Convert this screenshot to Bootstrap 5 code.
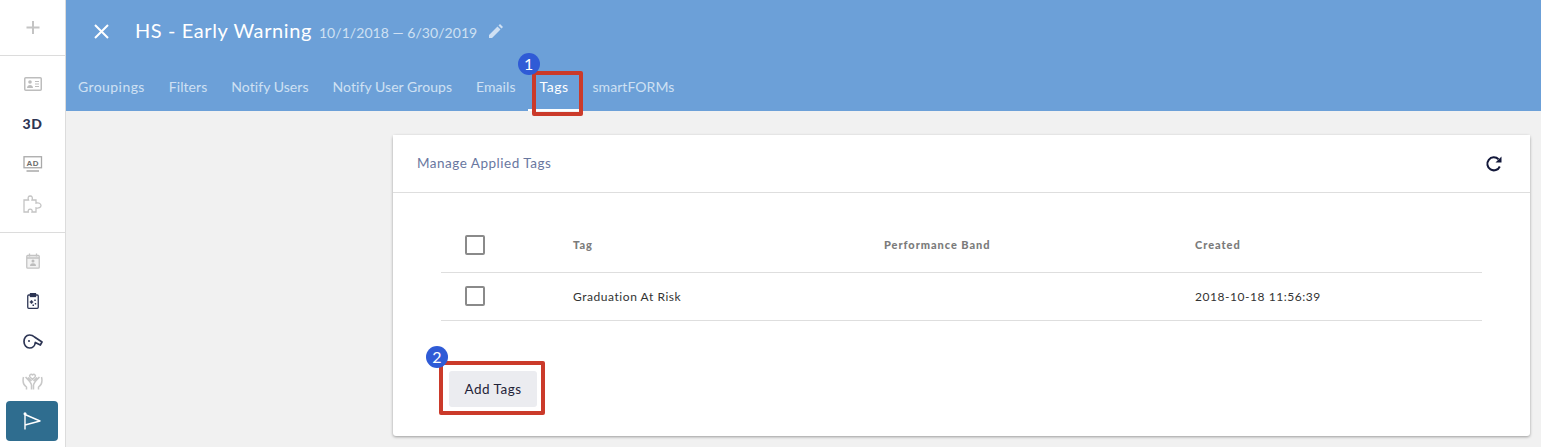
<!DOCTYPE html>
<html lang="en"><head><meta charset="utf-8"><title>Tags</title>
<link href="https://cdn.jsdelivr.net/npm/bootstrap@5.3.0/dist/css/bootstrap.min.css" rel="stylesheet">
<style>
html,body{height:447px;overflow:hidden}
body{font-family:"Lato","Noto Sans",sans-serif;background:#f1f1f1;color:#333;letter-spacing:.03em}
.app-shell{height:447px}
.side-rail{width:66px;flex:none;background:#fff;border-right:1px solid #dcdcdc}
.rail-top{height:56px;border-bottom:1px solid #dcdcdc}
.rail-group{height:177px;padding-top:8px;border-bottom:1px solid #dcdcdc}
.rail-item{height:40px}
.rail-label{font-size:14px;font-weight:900;color:#2d3554;letter-spacing:.04em;padding-bottom:2px}
.rail-active{width:52px;height:40px;background:#2f6d8f;border-radius:4px;margin:0 0 0 6px}
.rail-low{padding-top:8px}
.top-band{height:111px;background:#6ca0d8;color:#fff}
.title-row{height:62px;padding-left:28px}
.page-title{font-size:20px;margin:0 0 0 26px;padding-bottom:3px;letter-spacing:.6px;font-weight:400}
.page-dates{font-size:14px;color:#cfe0f3;margin-left:7px;letter-spacing:.05px;padding-top:3px}
.page-pen{margin-left:12px}
.tab-row{height:49px;padding-left:0}
.tab-link{font-size:14px;color:#cfe0f3;padding:0 12px;height:49px;display:flex;align-items:center;text-decoration:none;position:relative;letter-spacing:.06px}
.tab-first{letter-spacing:.42px}
.tab-on{color:#fff;letter-spacing:.5px;border-bottom:2px solid #fff;padding-top:2px}
.mark-box{position:absolute;border:4px solid #cb3a2a;border-radius:2px;pointer-events:none}
.mark-tab{left:4px;top:9px;width:51px;height:45px}
.step-dot{position:absolute;width:22px;height:22px;border-radius:50%;background:#2f5bd6;color:#fff;font-size:16px;display:flex;align-items:center;justify-content:center;letter-spacing:0}
.dot-tab{left:-10px;top:-9px}
.work-area{padding:24px 11px 0 327px}
.tag-panel{border:0;border-radius:3px;box-shadow:0 1px 3px rgba(0,0,0,.36);height:301px}
.panel-head{height:58px;padding:0 27px 0 24px;border-bottom:1px solid #dedede;background:#fff}
.panel-title{font-size:13.5px;color:#69779f;letter-spacing:.5px}
.panel-body{padding:31px 48px 0}
.tag-table{margin:0;table-layout:fixed;width:100%;font-size:12px;letter-spacing:.55px}
.tag-table th{font-size:11px;font-weight:900;color:#7b7b7b;height:48px;padding:0 12px 6px;vertical-align:middle;border-bottom:1px solid #dedede;letter-spacing:.95px}
.tag-table td{height:48px;padding:2px 12px 0;vertical-align:middle;color:#333;border-bottom:1px solid #dedede}
.tag-table td .box-tick{margin-top:-2px}
.col-check{width:120px;text-align:left}
.col-wide{width:311px}
.box-tick{display:block;width:20px;height:20px;border:2px solid #8a8a8a;border-radius:2px;margin-left:12px}
.btn-zone{position:relative;margin:50px 0 0 8px;width:88px}
.add-btn{width:88px;height:36px;background:#ebecf0;border:0;border-radius:3px;font-size:13.5px;color:#1f2338;padding:2px 0 0;letter-spacing:.5px}
.mark-add{left:-10px;top:-10px;width:106px;height:54px}
.dot-add{left:-23px;top:-25px}
</style></head>
<body>
<div class="app-shell d-flex">
<nav class="side-rail">
 <div class="rail-top d-flex align-items-center justify-content-center">
  <svg width="16" height="16" viewBox="0 0 16 16" stroke="#c4c4c4" stroke-width="2" fill="none"><path d="M8 1v13M1.500 7.500h13"/></svg>
 </div>
 <div class="rail-group">
  <div class="rail-item d-flex align-items-center justify-content-center">
   <svg width="18" height="14" viewBox="0 0 18 14" fill="none" stroke="#bdbdbd"><rect x=".75" y=".75" width="16.500" height="12.500" rx="1" stroke-width="1.500"/><circle cx="6" cy="5" r="1.800" fill="#bdbdbd" stroke="none"/><path d="M3 11c0-2 1.500-3 3-3s3 1 3 3z" fill="#bdbdbd" stroke="none"/><path d="M11 4.500h4M11 7h4M11 9.500h4"/></svg>
  </div>
  <div class="rail-item d-flex align-items-center justify-content-center"><span class="rail-label">3D</span></div>
  <div class="rail-item d-flex align-items-center justify-content-center">
   <svg width="20" height="17" viewBox="0 0 20 17" fill="none" stroke="#a9a9a9"><rect x="1" y=".75" width="17.500" height="11" stroke-width="1.300"/><text x="9.700" y="9.500" text-anchor="middle" font-size="8" font-weight="700" fill="#6d6d6d" stroke="none" font-family="Liberation Sans">AD</text><path d="M3.500 15h12.500" stroke-width="1.500"/></svg>
  </div>
  <div class="rail-item d-flex align-items-center justify-content-center">
   <svg width="19" height="18" viewBox="0 0 19 18" fill="none" stroke="#c4c4c4" stroke-width="1.300"><path d="M1 5h4.500C4.500 2.500 5.500 1 7.200 1s2.800 1.500 1.800 4h4v3.200c2.500-.8 5 .2 5 2.300s-2.500 3-5 2.300V17H9c.6-1.800-.3-2.800-1.800-2.800S4.800 15.200 5.300 17H1z"/></svg>
  </div>
 </div>
 <div class="rail-low">
  <div class="rail-item d-flex align-items-center justify-content-center">
   <svg width="14" height="16" viewBox="0 0 14 16" fill="none" stroke="#c4c4c4" stroke-width="1.300"><rect x=".75" y="2.500" width="12.500" height="12.700" rx="1" fill="#f2f2f2"/><path d="M3.500.5v3M10.500.5v3M1 5h12"/><circle cx="7" cy="8" r="1.500" fill="#bdbdbd" stroke="none"/><path d="M4 13c0-2 1.500-2.700 3-2.700s3 .7 3 2.700z" fill="#bdbdbd" stroke="none"/></svg>
  </div>
  <div class="rail-item d-flex align-items-center justify-content-center">
   <svg width="12" height="16" viewBox="0 0 12 16" fill="none" stroke="#2d3554" stroke-width="1.300"><rect x=".75" y="2" width="10.500" height="13.300" rx="1"/><rect x="3.500" y=".5" width="5" height="3" fill="#2d3554"/><path d="M2.800 9h3.400M4.500 7.300v3.400M8 6.500v1.500M8.500 10v1.500M5.500 12.200h1.500" stroke-width="1.400"/></svg>
  </div>
  <div class="rail-item d-flex align-items-center justify-content-center">
   <svg width="20" height="15" viewBox="0 0 20 15" fill="none" stroke="#2d3554" stroke-width="1.700" stroke-linejoin="round"><path d="M6.500 1C9 1 10.500 2 11.500 3l7.500 5-1.700 3-5-2.500C12 11.500 9.800 14 6.500 14 3.200 14 1 11 1 7.500S3 1 6.500 1z"/><circle cx="6" cy="7" r="1" fill="#2d3554" stroke="none"/></svg>
  </div>
  <div class="rail-item d-flex align-items-center justify-content-center">
   <svg width="21" height="18" viewBox="0 0 21 18" fill="none" stroke="#c8c8c8" stroke-width="1.500" stroke-linejoin="round"><path d="M10.500 7.500 8 5C6.800 3.500 8.800 1 10.500 3 12.200 1 14.200 3.500 13 5z"/><path d="M1.500 5C.5 9 1.500 13 4.500 15v2.500M3.500 5c2 2 5.500 5 6 8v4.500M6 5.500 9.500 9M19.500 5c1 4 0 8-3 10v2.500M17.500 5c-2 2-5.500 5-6 8v4.500M15 5.500 11.500 9"/></svg>
  </div>
  <div class="rail-active d-flex align-items-center justify-content-center">
   <svg width="18" height="18" viewBox="0 0 18 18" fill="none" stroke="#fff" stroke-width="1.400" stroke-linejoin="round"><path d="M2 1.500v16M2 2.500l15 6.500-15 4"/><circle cx="2" cy="1.800" r="1.500" fill="#fff" stroke="none"/></svg>
  </div>
 </div>
</nav>
<div class="flex-grow-1 d-flex flex-column">
 <header class="top-band">
  <div class="title-row d-flex align-items-center">
   <svg width="15" height="15" viewBox="0 0 15 15" stroke="#fff" stroke-width="2" fill="none"><path d="M1 1l13 13M14 1 1 14"/></svg>
   <h1 class="page-title">HS - Early Warning</h1>
   <span class="page-dates">10/1/2018 — 6/30/2019</span>
   <svg class="page-pen" width="14" height="14" viewBox="0 0 14 14" fill="#cfe0f3"><path d="M0 14v-3L8.500 2.500l3 3L3 14zM9.500 1.500 11 0l3 3-1.500 1.500z"/></svg>
  </div>
  <nav class="tab-row d-flex">
   <a class="tab-link tab-first" href="#">Groupings</a>
   <a class="tab-link" href="#">Filters</a>
   <a class="tab-link" href="#">Notify Users</a>
   <a class="tab-link" href="#">Notify User Groups</a>
   <a class="tab-link" href="#">Emails</a>
   <a class="tab-link tab-on" href="#">Tags<span class="mark-box mark-tab"></span><span class="step-dot dot-tab">1</span></a>
   <a class="tab-link" href="#">smartFORMs</a>
  </nav>
 </header>
 <main class="work-area flex-grow-1">
  <div class="card tag-panel">
   <div class="panel-head d-flex align-items-center justify-content-between">
    <span class="panel-title">Manage Applied Tags</span>
    <svg width="18" height="18" viewBox="0 0 18 18" fill="none" stroke="#13183a" stroke-width="2"><path d="M14.800 11.500A6.500 6.500 0 1 1 13.500 4.300"/><path d="M16.500 1.500v6h-6z" fill="#13183a" stroke="none"/></svg>
   </div>
   <div class="panel-body">
    <table class="table tag-table">
     <thead><tr><th class="col-check"><span class="box-tick"></span></th><th class="col-wide">Tag</th><th class="col-wide">Performance Band</th><th>Created</th></tr></thead>
     <tbody><tr><td><span class="box-tick"></span></td><td>Graduation At Risk</td><td></td><td>2018-10-18 11:56:39</td></tr></tbody>
    </table>
    <div class="btn-zone">
     <button class="btn add-btn" type="button">Add Tags</button>
     <span class="mark-box mark-add"></span><span class="step-dot dot-add">2</span>
    </div>
   </div>
  </div>
 </main>
</div>
</div>
</body></html>
